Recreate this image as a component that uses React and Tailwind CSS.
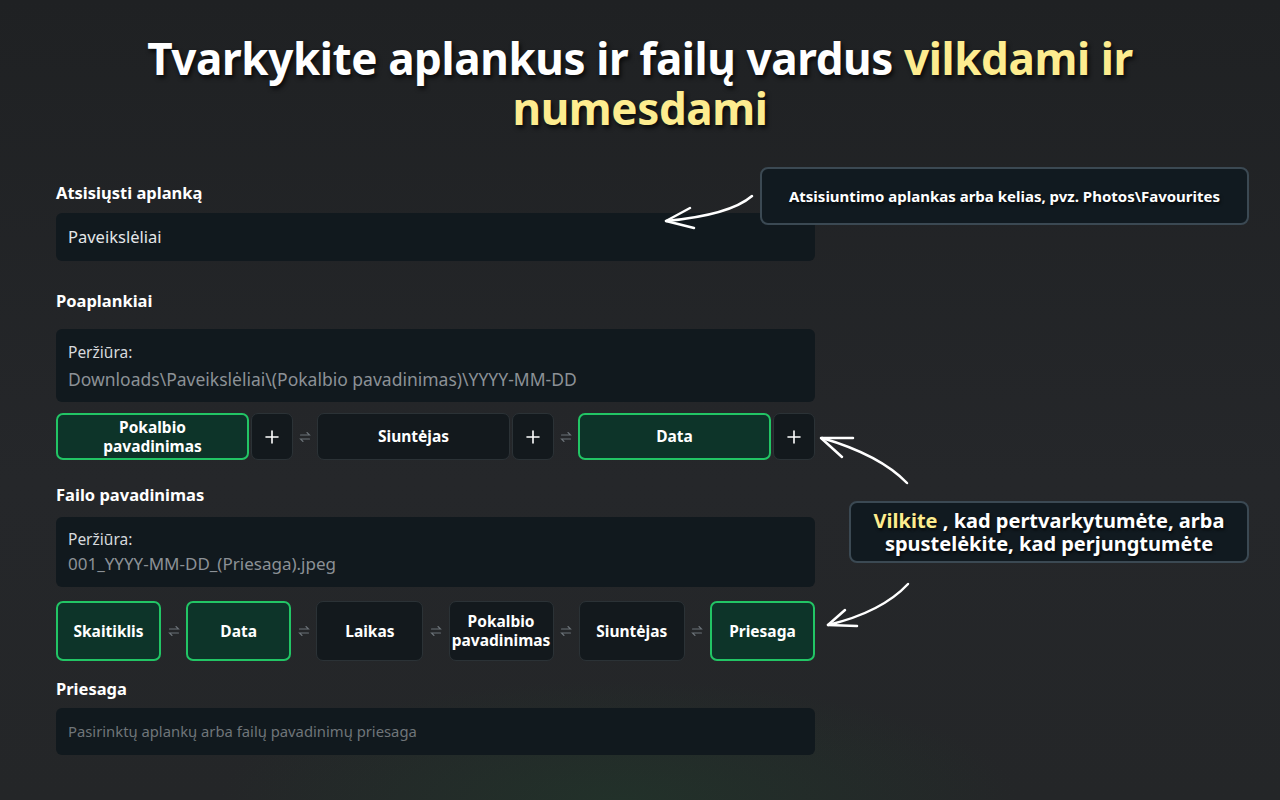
import React from "react";

const font = { fontFamily: '"Noto Sans", "Open Sans", sans-serif' };

function Swap() {
  return (
    <div className="w-[24px] flex items-center justify-center text-[#6b7278]">
      <svg width="12" height="12" viewBox="0 0 12 12" fill="none" stroke="currentColor" strokeWidth="1.1" strokeLinecap="round">
        <path d="M1.5 4h9l-2.5-2.5" />
        <path d="M10.5 8h-9l2.5 2.5" />
      </svg>
    </div>
  );
}

function Chip({ label, active, w, h }) {
  return (
    <div
      className={
        "flex items-center justify-center text-center rounded-[7px] text-white font-bold text-[15.5px] leading-[19px] " +
        w + " " + h + " " +
        (active ? "bg-[#0d3429] border-2 border-[#22c565]" : "bg-[#13191d] border border-[#2b3236]")
      }
    >
      <span className="whitespace-pre-line">{label}</span>
    </div>
  );
}

function Plus() {
  return (
    <div className="ml-[2px] w-[42px] h-[47px] flex items-center justify-center rounded-[7px] bg-[#13191d] border border-[#2b3236] text-white">
      <svg width="14" height="14" viewBox="0 0 14 14" stroke="currentColor" strokeWidth="1.6" strokeLinecap="round">
        <path d="M7 1v12M1 7h12" />
      </svg>
    </div>
  );
}

export default function App() {
  return (
    <div
      className="relative w-[1280px] h-[800px] overflow-hidden text-white"
      style={{
        ...font,
        background:
          "radial-gradient(ellipse 400px 120px at 620px 800px, rgba(30,70,45,0.35), transparent), linear-gradient(180deg, #1f2123 0%, #25272a 60%, #242628 100%)",
      }}
    >
      <div
        className="pt-[33px] text-center font-bold text-[44px] leading-[50px] tracking-[-0.4px]"
        style={{ textShadow: "2px 3px 4px rgba(0,0,0,0.7)" }}
      >
        <div>
          Tvarkykite aplankus ir failų vardus <span className="text-[#fdec8f]">vilkdami ir</span>
        </div>
        <div className="text-[#fdec8f]">numesdami</div>
      </div>

      <div className="ml-[56px] w-[759px] mt-[50px] flex flex-col">
        <div className="font-bold text-[16.5px] leading-[20px]">Atsisiųsti aplanką</div>
        <div className="mt-[10px] h-[48px] rounded-[6px] bg-[#11191e] flex items-center px-[12px] text-[16.5px] text-[#e5e7e9]">
          Paveikslėliai
        </div>

        <div className="mt-[30px] font-bold text-[16.5px] leading-[20px]">Poaplankiai</div>
        <div className="mt-[18px] h-[73px] rounded-[6px] bg-[#11191e] flex flex-col justify-center px-[12px]">
          <div className="text-[15.5px] leading-[20px] text-[#d7dadd]">Peržiūra:</div>
          <div className="mt-[6px] text-[17.5px] leading-[22px] text-[#8c9196]">
            Downloads\Paveikslėliai\(Pokalbio pavadinimas)\YYYY-MM-DD
          </div>
        </div>

        <div className="mt-[11px] flex items-center">
          <Chip label={"Pokalbio\npavadinimas"} active w="w-[193px]" h="h-[47px]" />
          <Plus />
          <Swap />
          <Chip label="Siuntėjas" w="w-[193px]" h="h-[47px]" />
          <Plus />
          <Swap />
          <Chip label="Data" active w="w-[193px]" h="h-[47px]" />
          <Plus />
        </div>

        <div className="mt-[25px] font-bold text-[16.5px] leading-[20px]">Failo pavadinimas</div>
        <div className="mt-[12px] h-[70px] rounded-[6px] bg-[#11191e] flex flex-col justify-center px-[12px]">
          <div className="text-[15.5px] leading-[20px] text-[#d7dadd]">Peržiūra:</div>
          <div className="mt-[4px] text-[17px] leading-[22px] text-[#8c9196]">001_YYYY-MM-DD_(Priesaga).jpeg</div>
        </div>

        <div className="mt-[14px] flex items-center justify-between">
          <Chip label="Skaitiklis" active w="w-[105px]" h="h-[60px]" />
          <Swap />
          <Chip label="Data" active w="w-[105px]" h="h-[60px]" />
          <Swap />
          <Chip label="Laikas" w="w-[107px]" h="h-[60px]" />
          <Swap />
          <Chip label={"Pokalbio\npavadinimas"} w="w-[105px]" h="h-[60px]" />
          <Swap />
          <Chip label="Siuntėjas" w="w-[106px]" h="h-[60px]" />
          <Swap />
          <Chip label="Priesaga" active w="w-[105px]" h="h-[60px]" />
        </div>

        <div className="mt-[18px] font-bold text-[16.5px] leading-[20px]">Priesaga</div>
        <div className="mt-[9px] h-[47px] rounded-[6px] bg-[#11191e] flex items-center px-[12px] text-[14.8px] text-[#6f7579]">
          Pasirinktų aplankų arba failų pavadinimų priesaga
        </div>
      </div>

      {/* Tooltips */}
      <div
        className="absolute left-[760px] top-[167px] w-[489px] h-[58px] rounded-[8px] bg-[#111a20] border-2 border-[#3b4953] flex items-center justify-center font-bold text-[15px]"
        style={{ textShadow: "1px 2px 3px rgba(0,0,0,0.7)" }}
      >
        Atsisiuntimo aplankas arba kelias, pvz. Photos\Favourites
      </div>
      <div
        className="absolute left-[849px] top-[501px] w-[400px] h-[62px] rounded-[8px] bg-[#111a20] border-2 border-[#3b4953] flex flex-col items-center justify-center text-center font-bold text-[20px] leading-[23px]"
        style={{ textShadow: "1px 2px 3px rgba(0,0,0,0.7)" }}
      >
        <div>
          <span className="text-[#fdec8f]">Vilkite</span> , kad pertvarkytumėte, arba
        </div>
        <div>spustelėkite, kad perjungtumėte</div>
      </div>

      {/* Arrows */}
      <svg className="absolute left-0 top-0 pointer-events-none" width="1280" height="800" fill="none" stroke="white" strokeWidth="2.5" strokeLinecap="round" strokeLinejoin="round">
        <path d="M752 196 Q730 215 666 221" />
        <path d="M690 208 L666 221 L694 228" />
        <path d="M907 483 Q880 455 822 438" />
        <path d="M853 438 L821 438 L842 457" />
        <path d="M908 584 Q882 612 828 625" />
        <path d="M845 610 L828 625 L857 626" />
      </svg>
    </div>
  );
}
